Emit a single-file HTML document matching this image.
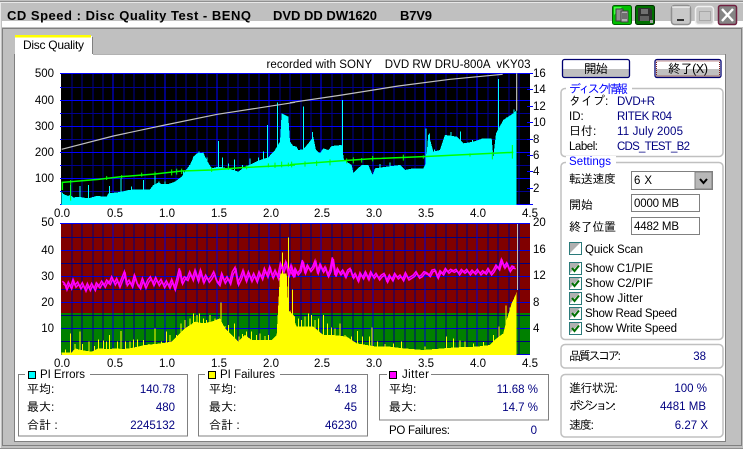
<!DOCTYPE html>
<html><head><meta charset="utf-8"><style>
html,body{margin:0;padding:0;background:#c0c0c0;overflow:hidden}
svg{display:block}
text{font-family:"Liberation Sans","IPAGothic","Noto Sans CJK JP",sans-serif;font-size:11.5px;fill:#000;white-space:pre}
.j{font-family:"Liberation Sans","IPAGothic","Noto Sans CJK JP",sans-serif;font-size:12px}
.v{fill:#000080;text-anchor:end}
.vl{fill:#000080}
.b{fill:#0000ff}
.e{text-anchor:end}
.m{text-anchor:middle}
.t{font-weight:bold;font-size:13px}
.g{fill:none;stroke:#c0c0c0;stroke-width:1.5}
.k{fill:none;stroke:#808080;stroke-width:1;shape-rendering:crispEdges}
</style></head><body>
<svg width="743" height="449" viewBox="0 0 743 449" xmlns="http://www.w3.org/2000/svg">
<defs>
<path id="vmin" shape-rendering="crispEdges" d="M72 0V132M82 0V132M93 0V132M103 0V132M124 0V132M134 0V132M145 0V132M155 0V132M176 0V132M186 0V132M197 0V132M207 0V132M228 0V132M238 0V132M249 0V132M259 0V132M280 0V132M290 0V132M301 0V132M311 0V132M332 0V132M342 0V132M353 0V132M363 0V132M384 0V132M394 0V132M405 0V132M415 0V132M436 0V132M446 0V132M457 0V132M467 0V132M488 0V132M498 0V132M509 0V132M519 0V132"/>
<path id="vmaj" shape-rendering="crispEdges" d="M113 0V132M165 0V132M217 0V132M269 0V132M321 0V132M373 0V132M425 0V132M477 0V132"/>
<path id="hmin" shape-rendering="crispEdges" d="M61 14.5H530M61 40.5H530M61 66.5H530M61 92.5H530M61 118.5H530"/>
<path id="hmaj" shape-rendering="crispEdges" d="M61 .5H530M61 27.5H530M61 53.5H530M61 79.5H530M61 105.5H530M61 131.5H530"/>
<g id="cb"><rect x=".5" y=".5" width="12" height="12" fill="#fff" stroke="#2a7a7a"/><path d="M1 1H11L1 11Z" fill="#b0b0b0"/></g>
<g id="cc"><use href="#cb"/><path d="M3 6L5.5 9L10 3.5" fill="none" stroke="#007000" stroke-width="2"/></g>
<path id="j1" fill="none" stroke="#ff00ff" stroke-width="4.5" d="M22 184L29 190L33 203L40 186L47 200L54 178L60 195L68 186L75 200L82 188L90 207L97 190L103 205L110 190L118 205L124 188L132 197L140 183L148 195L155 180L163 187L170 170L178 188L185 175L192 195L200 175L208 155L214 190L222 180L230 195L238 165L246 190L254 200L262 175L270 198L278 180L286 170L294 190L302 172L310 190L318 178L326 196L334 182L342 198L350 178L358 203L365 178L373 145L380 185L388 170L396 175L404 155L412 175L420 150L428 178L436 150L444 182L452 165L460 180L468 170L476 155L484 180L492 190L500 160L508 183L516 170L524 186L532 155L540 142L548 188L556 172L564 150L572 178L580 155L588 178L596 160L604 180L612 155L620 172L628 145L636 165L644 140L652 168L660 150L668 170L676 130L684 150L692 125L700 160L708 135L716 165L720 148"/>
<path id="j2" fill="none" stroke="#ff00ff" stroke-width="4.5" d="M0 150L8 165L15 145L22 160L30 150L37 120L44 155L52 135L60 150L68 140L75 122L82 155L90 132L98 152L105 140L113 165L120 150L127 112L135 165L142 145L150 160L158 150L165 168L173 150L180 145L188 170L195 160L203 180L210 158L218 172L226 155L234 175L242 155L250 170L258 160L266 175L274 165L282 160L290 182L298 165L306 178L314 160L322 172L330 165L338 178L346 158L354 175L362 170L370 165L378 155L386 170L394 165L402 155L410 158L418 165L426 150L434 148L442 170L450 152L458 160L466 145L474 155L482 148L490 152L498 148L506 160L514 148L522 155L530 148L538 160L546 150L554 158L562 148L570 160L578 152L586 158L594 145L602 160L610 150L618 135L626 145L634 118L642 140L650 128L658 150L666 138L674 142"/>
</defs>

<!-- window -->
<rect width="743" height="449" fill="#c0c0c0"/>
<path d="M0 1.5H743" stroke="#909090"/>
<path d="M0 2.5H743" stroke="#e8e8e8"/>
<path d="M.5 2V449" stroke="#e8e8e8"/>
<rect x="2" y="21" width="741" height="6" fill="#fff"/>
<rect x="2.5" y="28.5" width="739" height="417" fill="#c0c0c0" stroke="#808080"/>
<path d="M0 448.5H743" stroke="#909090"/>

<text class="t" x="7" y="20" textLength="244">CD Speed : Disc Quality Test - BENQ</text>
<text class="t" x="273" y="20" textLength="104">DVD DD DW1620</text>
<text class="t" x="400" y="20" textLength="32">B7V9</text>

<!-- title icons -->
<rect x="612.5" y="5.5" width="19" height="19" rx="2" fill="#00c000" stroke="#006000"/>
<path d="M614 7h8l-8 8z" fill="#40ff40"/>
<rect x="616" y="9" width="7" height="12" fill="#909090" stroke="#404040"/>
<rect x="621" y="11" width="7" height="11" fill="#b0b0b0" stroke="#404040"/>
<path d="M622 14h5M622 16h5M622 18h5" stroke="#303030"/>
<rect x="635.5" y="5.5" width="19" height="19" rx="2" fill="#007000" stroke="#003000"/>
<path d="M638 8h12l2 2v11h-14z" fill="#303030"/>
<rect x="641" y="9" width="7" height="5" fill="#707070"/>
<rect x="640" y="16" width="9" height="5" fill="#606060"/>
<rect x="650" y="20" width="3" height="3" fill="#a0a0a0"/>
<rect x="671.5" y="5.5" width="19" height="19" rx="3" fill="#c8c8c8" stroke="#909090" stroke-width="1.5"/>
<path d="M672 7H690" stroke="#fff"/>
<rect x="677" y="19" width="7" height="2" fill="#303030"/>
<rect x="695.5" y="6.5" width="18" height="18" rx="3" fill="#c8c8c8" stroke="#f0f0f0" stroke-width="1.5"/>
<rect x="699.5" y="11.5" width="11" height="9" fill="none" stroke="#a8a8a8"/>
<rect x="718.5" y="5.5" width="18" height="19" rx="2" fill="#858585" stroke="#702040" stroke-width="1.5"/>
<path d="M722 9L733 21M733 9L722 21" stroke="#fff" stroke-width="2.4"/>

<!-- client + tab -->
<rect x="15" y="54" width="710" height="387" fill="#fff"/>
<path d="M725.5 54V441.5H15" fill="none" stroke="#808080"/>
<path d="M14.5 54V442" stroke="#808080"/>
<rect x="15" y="36" width="77" height="20" fill="#fff"/>
<rect x="15" y="35" width="76" height="2.5" fill="#ffff00"/>
<path d="M92.5 37V54" stroke="#808080"/>
<path d="M93 54.5H725" stroke="#808080" opacity=".6"/>
<text x="23" y="49" style="font-size:12px" textLength="61">Disc Quality</text>

<text x="266.5" y="68" textLength="264">recorded with SONY    DVD RW DRU-800A  vKY03</text>

<!-- TOP CHART -->
<rect x="61" y="73" width="469" height="132" fill="#000"/>
<g transform="translate(0 73)">
<use href="#vmin" stroke="#000090"/>
<use href="#hmin" stroke="#000090"/>
<use href="#vmaj" stroke="#0000ff"/>
<use href="#hmaj" stroke="#0000ff"/>
</g>
<path shape-rendering="crispEdges" d="M60 73.5H64M60 87.5H62M60 100.5H62M60 113.5H62M60 126.5H62M60 139.5H62M60 152.5H62M60 165.5H62M60 178.5H62M60 191.5H62M60 204.5H62M527 73.5H533M527 89.5H533M527 106.5H533M527 122.5H533M527 139.5H533M527 155.5H533M527 171.5H533M527 188.5H533M527 204.5H533" stroke="#0000ff"/>
<g shape-rendering="crispEdges">
<g transform="translate(55 70) scale(.33333)">
<path fill="#00ffff" d="M20 405V365L25 372L40 378L45 375L55 382L75 381L100 385L125 378L155 380L160 370L180 368L200 365L220 360L250 358L285 358L295 345L310 338L320 342L340 342L360 335L380 320L395 297L405 285L415 262L425 250L445 248L455 270L470 295L490 290L520 295L550 305L570 290L590 282L610 272L640 262L660 240L675 215L680 130L700 140L705 215L720 235V405Z"/>
<path stroke="#00ffff" stroke-width="3" fill="none" d="M47 405V345M75 405V348M100 405V345M163 405V348M198 405V325M230 405V350M265 405V330M300 405V315M312 405V335M330 405V335M385 405V305M403 405V285M416 405V260M432 405V245M456 405V262M490 405V213M502 405V262M520 405V280M538 405V268M562 405V285M585 405V265M610 405V262M625 405V245M637 405V165M667 405V97"/>
</g>
<g transform="translate(290 70) scale(.33333)">
<path fill="#00ffff" d="M0 405V225L20 230L25 240L40 238L55 220L70 200L78 240L90 250L100 235L115 240L125 228L155 225L162 270L185 285L190 308L215 285L235 285L248 315L255 295L290 290L330 285L345 300L370 295L400 295L408 280L415 190L430 245L450 240L465 195L500 200L520 220L550 215L580 205L605 205L610 260L618 190L640 150L670 130L680 120V405Z"/>
<path stroke="#00ffff" stroke-width="3" fill="none" d="M40 405V110M67 405V186M157 405V90M270 405V282M300 405V278M408 405V175M418 405V190M434 405V238M483 405V186M511 405V184M548 405V210M576 405V205M625 405V27M650 405V142M672 405V118"/>
</g>
</g>
<g transform="translate(55 70) scale(.33333)" fill="none">
<path stroke="#c0c0c0" stroke-width="3.5" d="M20 238L175 198L330 165L487 133L720 97"/>
<path stroke="#00ff00" stroke-width="4.5" d="M22 360V337L50 335L130 328L200 320L300 312L380 303L470 300L560 293L720 285"/>
<path stroke="#00ff00" stroke-width="3" d="M47 330V392M155 318V330M200 315V326M260 308V320M300 305V318M350 298V316M365 296V314M380 296V312M470 292V306M520 288V300M575 286V298M640 280V292M660 278V294M680 275V292M700 278V290"/>
</g>
<g transform="translate(290 70) scale(.33333)" fill="none">
<path stroke="#c0c0c0" stroke-width="3.5" d="M0 98L156 75L325 48L480 28L638 13"/>
<path stroke="#c0c0c0" stroke-width="3.5" d="M680 10V122"/>
<path stroke="#00ff00" stroke-width="4.5" d="M0 284L160 272L250 266L400 260L670 247"/>
<path stroke="#00ff00" stroke-width="3" d="M5 275V292M45 274V290M80 272V288M120 268V286M170 265V280M190 262V280M215 264V278M248 258V274M340 254V272M400 256V266M540 250V260M607 245V268M667 225V266"/>
</g>

<g class="l">
<text class="e" x="54" y="77">500</text>
<text class="e" x="54" y="104">400</text>
<text class="e" x="54" y="130">300</text>
<text class="e" x="54" y="156">200</text>
<text class="e" x="54" y="182">100</text>
<text x="533" y="77">16</text>
<text x="533" y="93">14</text>
<text x="533" y="110">12</text>
<text x="533" y="126">10</text>
<text x="533" y="143">8</text>
<text x="533" y="159">6</text>
<text x="533" y="175">4</text>
<text x="533" y="192">2</text>
</g>
<g>
<text class="m" x="62" y="217">0.0</text><text class="m" x="115" y="217">0.5</text><text class="m" x="167" y="217">1.0</text><text class="m" x="219" y="217">1.5</text><text class="m" x="271" y="217">2.0</text><text class="m" x="322" y="217">2.5</text><text class="m" x="374" y="217">3.0</text><text class="m" x="426" y="217">3.5</text><text class="m" x="478" y="217">4.0</text><text class="m" x="530" y="217">4.5</text>
</g>

<!-- BOTTOM CHART -->
<rect x="61" y="223" width="469" height="90" fill="#800000"/>
<rect x="61" y="313" width="469" height="42" fill="#008000"/>
<g transform="translate(0 223)">
<use href="#vmin" stroke="#000080"/>
<use href="#hmin" stroke="#000080"/>
<use href="#vmaj" stroke="#0000d8"/>
<use href="#hmaj" stroke="#0000d8"/>
</g>
<g shape-rendering="crispEdges">
<g transform="translate(55 220) scale(.33333)">
<path fill="#ffff00" d="M20 405V398L50 398L60 385L75 390L110 395L130 385L165 388L175 385L205 387L225 385L270 375L320 370L350 365L370 345L390 325L410 312L420 305L445 310L470 305L495 295L510 325L530 345L550 365L570 345L590 360L650 360L665 345L675 160L695 160L700 270L720 290V405Z"/>
<path stroke="#ffff00" stroke-width="3" fill="none" d="M32 405V388M47 405V340M60 405V372M75 405V335M82 405V372M102 405V365M118 405V378M130 405V358M145 405V362M155 405V365M163 405V345M188 405V365M198 405V333M212 405V365M225 405V365M235 405V358M247 405V358M265 405V360M282 405V372M300 405V325M320 405V365M335 405V335M345 405V345M365 405V345M378 405V310M390 405V300M405 405V295M416 405V280M426 405V285M433 405V280M445 405V295M455 405V300M465 405V285M480 405V295M498 405V247M510 405V318M520 405V315M538 405V310M552 405V350M562 405V342M575 405V335M590 405V335M605 405V345M615 405V340M630 405V348M640 405V345M670 405V310M682 405V97M700 405V52M712 405V208"/>
</g>
<g transform="translate(290 220) scale(.33333)">
<path fill="#ffff00" d="M0 405V270L10 295L20 320L50 320L70 320L100 345L130 345L170 350L200 370L260 380L300 380L340 385L400 390L460 385L500 382L560 380L600 375L620 355L640 340L650 300L665 250L678 222L680 210V405Z"/>
<path stroke="#ffff00" stroke-width="3" fill="none" d="M7 405V208M25 405V295M35 405V300M45 405V290M55 405V280M65 405V285M75 405V300M85 405V295M100 405V285M112 405V310M125 405V322M135 405V325M150 405V310M165 405V345M185 405V350M202 405V333M218 405V350M238 405V350M246 405V322M262 405V365M285 405V372M310 405V370M335 405V365M405 405V380M470 405V350M490 405V355M510 405V362M525 405V365M550 405V370M580 405V366M610 405V345M627 405V320M648 405V257M660 405V262"/>
</g>
</g>
<g transform="translate(55 220) scale(.33333)"><use href="#j1"/><use href="#j1" x="3" y="7"/></g>
<g transform="translate(290 220) scale(.33333)"><use href="#j2"/><use href="#j2" x="3" y="5"/></g>
<path d="M517.5 223V290" stroke="#c0c0c0" stroke-width="1"/>
<path d="M60 223.5H530" stroke="#0000ff" shape-rendering="crispEdges"/>

<text class="e" x="54" y="226">50</text>
<text class="e" x="54" y="254">40</text>
<text class="e" x="54" y="280">30</text>
<text class="e" x="54" y="306">20</text>
<text class="e" x="54" y="332">10</text>
<text x="533" y="226">20</text>
<text x="533" y="253">16</text>
<text x="533" y="279">12</text>
<text x="533" y="306">8</text>
<text x="533" y="332">4</text>
<text class="m" x="62" y="367">0.0</text><text class="m" x="115" y="367">0.5</text><text class="m" x="167" y="367">1.0</text><text class="m" x="219" y="367">1.5</text><text class="m" x="271" y="367">2.0</text><text class="m" x="322" y="367">2.5</text><text class="m" x="374" y="367">3.0</text><text class="m" x="426" y="367">3.5</text><text class="m" x="478" y="367">4.0</text><text class="m" x="530" y="367">4.5</text>

<!-- PI Errors -->
<rect x="18.5" y="374.5" width="169" height="61.5" class="k"/>
<rect x="25" y="369" width="65" height="10" fill="#fff"/>
<rect x="28.5" y="371.5" width="7" height="7" fill="#00ffff" stroke="#000"/>
<text x="40" y="378" textLength="45">PI Errors</text>
<text class="j" x="27" y="393">平均:</text><text class="v" x="175" y="393">140.78</text>
<text class="j" x="27" y="411">最大:</text><text class="v" x="175" y="411">480</text>
<text class="j" x="27" y="429">合計 :</text><text class="v" x="175" y="429">2245132</text>

<!-- PI Failures -->
<rect x="198.5" y="374.5" width="169" height="61.5" class="k"/>
<rect x="205" y="369" width="75" height="10" fill="#fff"/>
<rect x="208.5" y="371.5" width="7" height="7" fill="#ffff00" stroke="#000"/>
<text x="220" y="378" textLength="55">PI Failures</text>
<text class="j" x="209" y="393">平均:</text><text class="v" x="357" y="393">4.18</text>
<text class="j" x="209" y="411">最大:</text><text class="v" x="357" y="411">45</text>
<text class="j" x="209" y="429">合計 :</text><text class="v" x="357" y="429">46230</text>

<!-- Jitter -->
<rect x="379.5" y="374.5" width="169" height="45.5" class="k"/>
<rect x="387" y="369" width="44" height="10" fill="#fff"/>
<rect x="389.5" y="371.5" width="7" height="7" fill="#ff00ff" stroke="#000"/>
<text x="402" y="378" textLength="27">Jitter</text>
<text class="j" x="389" y="393">平均:</text><text class="v" x="538" y="393">11.68 %</text>
<text class="j" x="389" y="411">最大:</text><text class="v" x="538" y="411">14.7 %</text>
<text x="389" y="434" textLength="61">PO Failures:</text><text class="v" x="537" y="434">0</text>

<!-- Buttons -->
<rect x="562.5" y="59.5" width="67" height="18" rx="2" fill="#fff"/>
<rect x="563" y="69" width="66" height="8" fill="#c0c0c0"/>
<rect x="562.5" y="59.5" width="67" height="18" rx="2" fill="none" stroke="#000070" stroke-width="1.3"/>
<text class="j m" x="596" y="73" style="font-size:12.5px" textLength="24">開始</text>
<rect x="655" y="59.5" width="66" height="18" rx="2" fill="#fff"/>
<rect x="656" y="69" width="64" height="8" fill="#c0c0c0"/>
<rect x="655" y="59.5" width="66" height="18" rx="2" fill="none" stroke="#000070" stroke-width="1.3"/>
<rect x="656.5" y="61" width="63" height="15" fill="none" stroke="#802020" stroke-dasharray="1 1"/>
<text class="j m" x="688" y="73" style="font-size:12.5px" textLength="40">終了(X)</text>

<!-- Disk info -->
<rect x="561" y="88.5" width="162" height="68" rx="4" class="g"/>
<rect x="566" y="82" width="66" height="12" fill="#fff"/>
<text class="j b" x="569" y="93" textLength="59">ディスク情報</text>
<text class="j" x="569" y="105">タイプ:</text><text class="vl" x="617" y="105" textLength="38">DVD+R</text>
<text x="569" y="120">ID:</text><text class="vl" x="617" y="120" textLength="55">RITEK R04</text>
<text class="j" x="569" y="135">日付:</text><text class="vl" x="617" y="135" textLength="66">11 July 2005</text>
<text x="569" y="150" textLength="29">Label:</text><text class="vl" x="617" y="150" textLength="73">CDS_TEST_B2</text>

<!-- Settings -->
<rect x="561" y="162.5" width="162" height="177" rx="4" class="g"/>
<rect x="566" y="156" width="50" height="12" fill="#fff"/>
<text class="b" x="569" y="165" textLength="42">Settings</text>
<text class="j" x="569" y="183" textLength="47">転送速度</text>
<rect x="631.5" y="171.5" width="81" height="18" fill="#fff" stroke="#808080"/>
<rect x="695" y="172" width="17" height="17" fill="#b8b8b8" stroke="#808080"/>
<path d="M700 179L703.5 183L707 179" fill="none" stroke="#000" stroke-width="2"/>
<text x="634" y="184" textLength="18">6 X</text>
<text class="j" x="569" y="209" textLength="24">開始</text>
<rect x="631.5" y="194.5" width="68" height="17" fill="#fff" stroke="#808080"/>
<text x="634" y="207" textLength="45">0000 MB</text>
<text class="j" x="569" y="231" textLength="47">終了位置</text>
<rect x="631.5" y="217.5" width="68" height="17" fill="#fff" stroke="#808080"/>
<text x="634" y="230" textLength="45">4482 MB</text>

<use href="#cb" x="569" y="242"/>
<text x="585" y="253" textLength="58">Quick Scan</text>
<use href="#cc" x="569" y="262"/>
<text x="585" y="272" textLength="68">Show C1/PIE</text>
<use href="#cc" x="569" y="277"/>
<text x="585" y="287" textLength="68">Show C2/PIF</text>
<use href="#cc" x="569" y="292"/>
<text x="585" y="302" textLength="58">Show Jitter</text>
<use href="#cc" x="569" y="307"/>
<text x="585" y="317" textLength="92">Show Read Speed</text>
<use href="#cc" x="569" y="322"/>
<text x="585" y="332" textLength="92">Show Write Speed</text>

<!-- Score -->
<rect x="561" y="344.5" width="162" height="23.5" rx="4" class="g"/>
<text class="j" x="569" y="360" textLength="52">品質スコア:</text>
<text class="v" x="706" y="360">38</text>

<!-- Progress -->
<rect x="561" y="374.5" width="162" height="62.5" rx="4" class="g"/>
<text class="j" x="569" y="392" textLength="49">進行状況:</text><text class="v" x="707" y="392">100 %</text>
<text class="j" x="569" y="410" textLength="47">ポジション:</text><text class="v" x="706" y="410">4481 MB</text>
<text class="j" x="569" y="429" textLength="25">速度:</text><text class="v" x="708" y="429">6.27 X</text>
</svg>
</body></html>
